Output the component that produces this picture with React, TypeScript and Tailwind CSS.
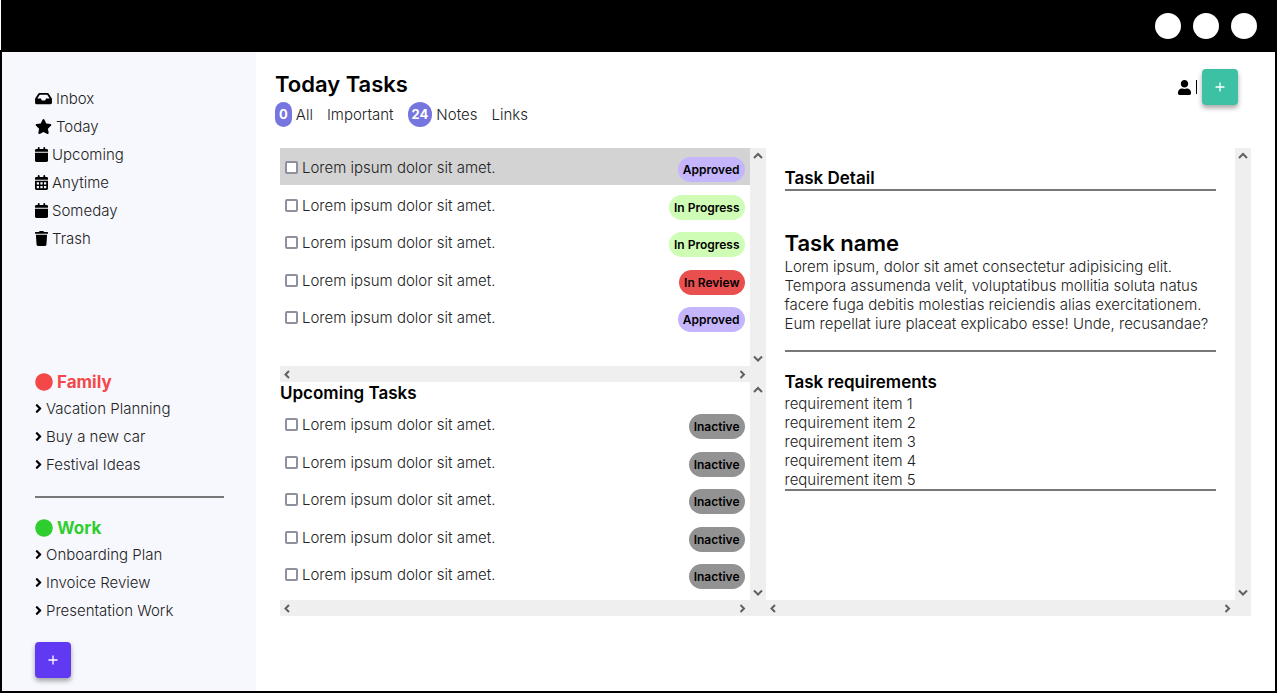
import type { ReactNode } from "react";
import { FaAngleRight, FaCircle, FaInbox, FaStar, FaTrash, FaUser } from "react-icons/fa";

function CalendarIcon({ withDays = false }: { withDays?: boolean }) {
  return (
    <svg viewBox="0 0 448 512" className="h-[15px] w-[13px]" fill="currentColor" fillRule="evenodd">
      <path d="M96 32a32 32 0 0 1 64 0v32h128V32a32 32 0 0 1 64 0v32h48a48 48 0 0 1 48 48v48H0v-48a48 48 0 0 1 48-48h48z" />
      <path
        d={
          withDays
            ? "M0 192h448v272a48 48 0 0 1-48 48H48a48 48 0 0 1-48-48zM60 246v78h78v-78zM185 246v78h78v-78zM310 246v78h78v-78zM60 374v78h78v-78zM185 374v78h78v-78zM310 374v78h78v-78z"
            : "M0 192h448v272a48 48 0 0 1-48 48H48a48 48 0 0 1-48-48z"
        }
      />
    </svg>
  );
}

const navItems = [
  { label: "Inbox", icon: <FaInbox className="h-[15px] w-[17px]" /> },
  { label: "Today", icon: <FaStar className="h-[15px] w-[17px]" /> },
  { label: "Upcoming", icon: <CalendarIcon /> },
  { label: "Anytime", icon: <CalendarIcon withDays /> },
  { label: "Someday", icon: <CalendarIcon /> },
  { label: "Trash", icon: <FaTrash className="h-[15px] w-[13px]" /> },
];

const pillColors = {
  Approved: "bg-[#c4b5fd]",
  "In Progress": "bg-[#cffdb5]",
  "In Review": "bg-[#e94f4f]",
  Inactive: "bg-[#929292]",
};

type Status = keyof typeof pillColors;

const todayTasks: Status[] = ["Approved", "In Progress", "In Progress", "In Review", "Approved"];
const upcomingTasks: Status[] = ["Inactive", "Inactive", "Inactive", "Inactive", "Inactive"];

type Direction = "up" | "down" | "left" | "right";

const arrowPaths: Record<Direction, string> = {
  up: "M4 10 8 6 12 10",
  down: "M4 6.5 8 10.5 12 6.5",
  left: "M9 5 5.5 8.5 9 12",
  right: "M6.5 5 10 8.5 6.5 12",
};

function ScrollArrow({ direction }: { direction: Direction }) {
  return (
    <button type="button" aria-label={`Scroll ${direction}`} className="block size-4">
      <svg viewBox="0 0 16 16" className="size-4" fill="none" stroke="#606060" strokeWidth="2">
        <path d={arrowPaths[direction]} />
      </svg>
    </button>
  );
}

function ScrollPanel({ className = "", children }: { className?: string; children: ReactNode }) {
  return (
    <section className={`grid grid-cols-[minmax(0,1fr)_16px] grid-rows-[1fr_16px] ${className}`}>
      <div>{children}</div>
      <div className="flex flex-col justify-between bg-[#efefef]">
        <ScrollArrow direction="up" />
        <ScrollArrow direction="down" />
      </div>
      <div className="flex justify-between bg-[#efefef]">
        <ScrollArrow direction="left" />
        <ScrollArrow direction="right" />
      </div>
      <div className="bg-[#efefef]" />
    </section>
  );
}

function TaskList({ tasks, highlightFirst = false }: { tasks: Status[]; highlightFirst?: boolean }) {
  return (
    <ul className="flex h-[187px] flex-col justify-between">
      {tasks.map((status, index) => (
        <li
          key={index}
          className={`flex h-[37px] items-start justify-between px-[5px] pt-[9px] ${
            highlightFirst && index === 0 ? "bg-[#d3d3d3]" : ""
          }`}
        >
          <label className="flex h-[21px] items-center gap-1">
            <input
              type="checkbox"
              className="size-[13px] appearance-none rounded-[2px] border-2 border-[#8f8f9d] bg-white checked:bg-[#5e35f2]"
            />
            Lorem ipsum dolor sit amet.
          </label>
          <span
            className={`flex h-[25px] items-center rounded-full px-[5px] text-[12px] font-semibold text-black ${pillColors[status]}`}
          >
            {status}
          </span>
        </li>
      ))}
    </ul>
  );
}

function Group({ name, color, items }: { name: string; color: string; items: string[] }) {
  return (
    <section>
      <h2 className={`flex h-6 items-center gap-1 text-[17px] font-bold ${color}`}>
        <FaCircle className="size-[18px]" />
        {name}
      </h2>
      <ul>
        {items.map((item) => (
          <li key={item}>
            <a href="#" className="flex h-7 items-center gap-1">
              <FaAngleRight className="h-[15px] w-[7px] text-black" />
              {item}
            </a>
          </li>
        ))}
      </ul>
    </section>
  );
}

function CountBadge({ count }: { count: number }) {
  return (
    <span className="flex h-[25px] items-center rounded-full bg-[#7775df] px-1 text-[13px] font-bold text-white">
      {count}
    </span>
  );
}

function AddButton({ className, label }: { className: string; label: string }) {
  return (
    <button
      type="button"
      aria-label={label}
      className={`flex size-9 items-center justify-center rounded-[4px] text-white shadow-[0_3px_5px_rgba(0,0,0,0.35)] ${className}`}
    >
      <svg viewBox="0 0 10 10" className="size-[10px]" fill="none" stroke="currentColor" strokeWidth="1.3">
        <path d="M5 .5v9M.5 5h9" />
      </svg>
    </button>
  );
}

export default function App() {
  return (
    <div className="flex min-h-screen flex-col bg-white font-['Inter',sans-serif] text-[15px] leading-[19px] font-light text-[#222]">
      <header className="ml-px flex h-[50px] items-center justify-end gap-3 bg-black pt-0.5 pr-5">
        <span className="size-[26px] rounded-full bg-white" />
        <span className="size-[26px] rounded-full bg-white" />
        <span className="size-[26px] rounded-full bg-white" />
      </header>

      <div className="flex flex-1 border-2 border-black">
        <aside className="w-[254px] shrink-0 bg-[#f7f8fd] pt-8 pr-8 pb-3 pl-[33px]">
          <nav>
            <ul>
              {navItems.map((item) => (
                <li key={item.label}>
                  <a href="#" className="flex h-7 items-center gap-1">
                    <span className="text-black">{item.icon}</span>
                    {item.label}
                  </a>
                </li>
              ))}
            </ul>
          </nav>
          <div className="mt-[118px] border-b-2 border-[#787878] pb-[18px]">
            <Group
              name="Family"
              color="text-[#f44848]"
              items={["Vacation Planning", "Buy a new car", "Festival Ideas"]}
            />
          </div>
          <div className="mt-[18px]">
            <Group
              name="Work"
              color="text-[#2fce2f]"
              items={["Onboarding Plan", "Invoice Review", "Presentation Work"]}
            />
          </div>
          <AddButton label="Add list" className="mt-[18px] bg-[#6239f3]" />
        </aside>

        <main className="min-w-0 flex-1 px-6 pt-[17px]">
          <div className="-ml-[5px] flex items-start justify-between pr-[13px]">
            <div>
              <h1 className="text-[22px] leading-[31px] font-semibold text-black">Today Tasks</h1>
              <ul className="flex h-7 items-center gap-[14px]">
                <li>
                  <a href="#" className="flex items-center gap-1">
                    <CountBadge count={0} />
                    All
                  </a>
                </li>
                <li>
                  <a href="#">Important</a>
                </li>
                <li>
                  <a href="#" className="flex items-center gap-1">
                    <CountBadge count={24} />
                    Notes
                  </a>
                </li>
                <li>
                  <a href="#">Links</a>
                </li>
              </ul>
            </div>
            <div className="flex items-center gap-[5px] text-black">
              <button type="button" aria-label="Profile">
                <FaUser className="h-[15px] w-[13px]" />
              </button>
              <span className="h-[14px] w-px bg-black" />
              <AddButton label="Add task" className="bg-[#3cc1a5]" />
            </div>
          </div>

          <div className="mt-5 grid grid-cols-2">
            <div>
              <ScrollPanel className="min-h-[234px]">
                <TaskList tasks={todayTasks} highlightFirst />
              </ScrollPanel>
              <ScrollPanel className="min-h-[234px]">
                <h2 className="text-[17px] leading-[23px] font-semibold text-black">Upcoming Tasks</h2>
                <TaskList tasks={upcomingTasks} />
              </ScrollPanel>
            </div>
            <ScrollPanel>
              <div className="px-[19px] pt-5">
                <h2 className="border-b-2 border-[#787878] text-[17px] leading-[21px] font-semibold text-black">
                  Task Detail
                </h2>
                <div className="mt-[38px] border-b-2 border-[#787878] pb-[17px]">
                  <h3 className="text-[22px] leading-7 font-semibold text-black">Task name</h3>
                  <p>
                    Lorem ipsum, dolor sit amet consectetur adipisicing elit. Tempora assumenda velit, voluptatibus
                    mollitia soluta natus facere fuga debitis molestias reiciendis alias exercitationem. Eum repellat
                    iure placeat explicabo esse! Unde, recusandae?
                  </p>
                </div>
                <div className="mt-[19px] border-b-2 border-[#787878]">
                  <h3 className="text-[17px] leading-[23px] font-semibold text-black">Task requirements</h3>
                  <ul>
                    {[1, 2, 3, 4, 5].map((n) => (
                      <li key={n}>requirement item {n}</li>
                    ))}
                  </ul>
                </div>
              </div>
            </ScrollPanel>
          </div>
        </main>
      </div>
    </div>
  );
}
